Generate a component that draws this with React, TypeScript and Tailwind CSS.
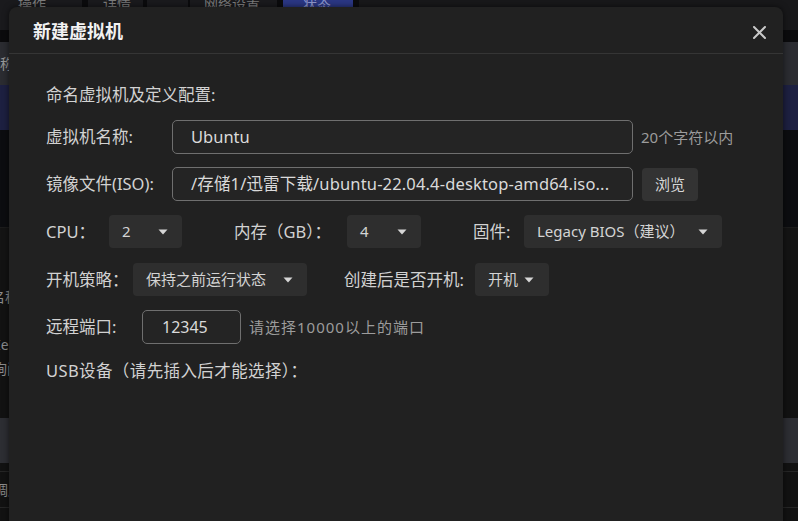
import React from "react";

const font = {
  fontFamily: '"Noto Sans", "Noto Sans CJK SC", sans-serif',
};

function Caret() {
  return (
    <svg width="10" height="6" viewBox="0 0 10 6">
      <path d="M0.5 0.5 L9.5 0.5 L5 5.5 Z" fill="#d6d6d6" />
    </svg>
  );
}

function Select({
  value,
  width,
  caretGap,
}: {
  value: string;
  width: string;
  caretGap?: boolean;
}) {
  return (
    <div
      className={`${width} h-[33px] rounded-[4px] bg-[#2e2e2e] flex items-center pl-[13px] pr-[14px] text-[15px] text-[#d4d4d4] ${
        caretGap ? "justify-start gap-[6px]" : "justify-between"
      }`}
    >
      <span className="leading-none">{value}</span>
      <Caret />
    </div>
  );
}

function Label({ children, className = "" }: { children: React.ReactNode; className?: string }) {
  return (
    <div className={`text-[16.5px] text-[#d2d2d2] leading-[24px] whitespace-nowrap shrink-0 ${className}`}>
      {children}
    </div>
  );
}

function BackgroundApp() {
  return (
    <div className="flex flex-col h-full text-[14px] text-[#8a8a8a]">
      {/* tab strip */}
      <div className="h-[30px] bg-[#0b0b0d] flex shrink-0 text-[#7c7c7c]">
        <div className="w-[82px] bg-[#1a1a1d] pl-[18px] leading-[14px] -mt-[3px]">操作</div>
        <div className="ml-[6px] w-[55px] bg-[#1a1a1d] pl-[15px] leading-[14px] -mt-[3px]">详情</div>
        <div className="ml-[4px] w-[41px] bg-[#1a1a1d]" />
        <div className="ml-[2px] w-[87px] bg-[#1a1a1d] pl-[14px] leading-[14px] -mt-[3px]">网络设置</div>
        <div className="ml-[6px] w-[70px] bg-[#2b3784] pl-[20px] leading-[14px] -mt-[3px] text-[#8f98cc]">状态</div>
        <div className="ml-[6px] flex-1 bg-[#18181a]" />
      </div>
      <div className="h-[12px] bg-[#0b0b0d] shrink-0" />
      <div className="h-[43px] bg-[#2b2c31] flex items-center shrink-0">
        <span className="-ml-[14px] text-[#9a9a9a]">名称</span>
      </div>
      <div className="h-[45px] bg-[#1d2041] shrink-0" />
      <div className="h-[98px] bg-[#0c0d10] border-b border-[#1c1c1c] shrink-0" />
      <div className="h-[32px] bg-[#141414] shrink-0" />
      <div className="h-[158px] bg-[#121212] flex flex-col shrink-0 pt-[27px] text-[#8c8c8c]">
        <span className="-ml-[9px] leading-[20px]">名称</span>
        <span className="mt-[28px] -ml-[4px] leading-[20px]">Ie</span>
        <span className="mt-[4px] -ml-[7px] leading-[20px]">询问</span>
      </div>
      <div className="h-[45px] bg-[#2d2e33] shrink-0" />
      <div className="h-[9px] bg-[#121212] border-b border-[#262626] shrink-0" />
      <div className="h-[35px] bg-[#121212] flex items-center shrink-0">
        <span className="-ml-[6px] text-[#8c8c8c]">调度</span>
      </div>
      <div className="flex-1 bg-[#121212] border-t border-[#262626]" />
    </div>
  );
}

export default function App() {
  return (
    <div className="relative w-[798px] h-[521px] overflow-hidden bg-[#121212]" style={font}>
      <BackgroundApp />

      {/* dialog */}
      <div className="absolute left-[9px] top-[7px] w-[774px] h-[540px] rounded-t-[8px] bg-[#212121] shadow-[0_0_6px_rgba(0,0,0,0.6)]">
        <div className="h-[47px] flex items-center justify-between pl-[24px] pr-[17px] border-b border-[#353535]">
          <h2 className="text-[18px] font-bold text-[#f2f2f2] leading-none mt-[1px]">新建虚拟机</h2>
          <svg width="13" height="13" viewBox="0 0 13 13" className="mt-[5px]">
            <path d="M1 1 L12 12 M12 1 L1 12" stroke="#c9c9c9" strokeWidth="2" strokeLinecap="round" />
          </svg>
        </div>

        <div className="pl-[37px] pt-[29px] flex flex-col">
          <Label>命名虚拟机及定义配置:</Label>

          {/* name */}
          <div className="mt-[13px] h-[34px] flex items-center">
            <Label className="w-[126px]">虚拟机名称:</Label>
            <div className="w-[461px] h-[34px] rounded-[5px] border border-[#6f6f6f] bg-[#242424] flex items-center pl-[18px] text-[16.5px] text-[#dadada]">
              Ubuntu
            </div>
            <span className="ml-[8px] text-[15px] text-[#9c9c9c]">20个字符以内</span>
          </div>

          {/* iso */}
          <div className="mt-[13px] h-[34px] flex items-center">
            <Label className="w-[126px]">镜像文件(ISO):</Label>
            <div className="w-[461px] h-[34px] rounded-[5px] border border-[#6f6f6f] bg-[#242424] flex items-center pl-[18px] pr-[6px] text-[16.5px] tracking-[0.15px] text-[#dadada] overflow-hidden whitespace-nowrap">
              /存储1/迅雷下载/ubuntu-22.04.4-desktop-amd64.iso...
            </div>
            <div className="ml-[9px] w-[56px] h-[33px] rounded-[4px] bg-[#333333] flex items-center justify-center text-[15px] text-[#d6d6d6]">
              浏览
            </div>
          </div>

          {/* cpu / memory / firmware */}
          <div className="mt-[14px] h-[33px] flex items-center">
            <Label className="w-[63px]">CPU：</Label>
            <Select value="2" width="w-[73px]" />
            <Label className="ml-[52px] w-[113px]">内存（GB）：</Label>
            <Select value="4" width="w-[74px]" />
            <Label className="ml-[52px] w-[51px]">固件:</Label>
            <Select value="Legacy BIOS（建议）" width="w-[198px]" />
          </div>

          {/* power policy */}
          <div className="mt-[15px] h-[33px] flex items-center">
            <Label className="w-[87px]">开机策略：</Label>
            <Select value="保持之前运行状态" width="w-[174px]" />
            <Label className="ml-[37px] w-[131px]">创建后是否开机:</Label>
            <Select value="开机" width="w-[74px]" caretGap />
          </div>

          {/* remote port */}
          <div className="mt-[14px] h-[34px] flex items-center">
            <Label className="w-[96px]">远程端口:</Label>
            <div className="w-[99px] h-[34px] rounded-[5px] border border-[#6f6f6f] bg-[#242424] flex items-center pl-[19px] text-[16px] text-[#dadada]">
              12345
            </div>
            <span className="ml-[8px] text-[15px] tracking-[1px] text-[#9c9c9c]">请选择10000以上的端口</span>
          </div>

          {/* usb */}
          <div className="mt-[10px] h-[34px] flex items-center">
            <Label className="tracking-[0.4px]">USB设备（请先插入后才能选择）：</Label>
          </div>
        </div>
      </div>
    </div>
  );
}
